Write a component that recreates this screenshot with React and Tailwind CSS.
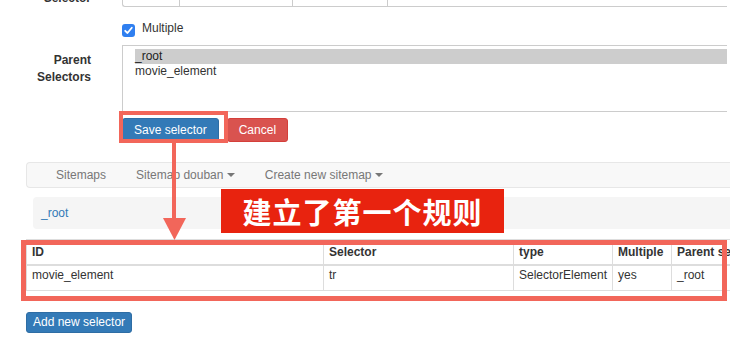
import React from "react";

function Caret() {
  return (
    <span className="inline-block align-middle w-0 h-0 border-l-[4px] border-r-[4px] border-t-[4px] border-l-transparent border-r-transparent border-t-[#777]" />
  );
}

export default function App() {
  const cols = ["ID", "Selector", "type", "Multiple", "Parent selectors"];
  const row = ["movie_element", "tr", "SelectorElement", "yes", "_root"];
  return (
    <div className="relative w-[730px] h-[347px] overflow-hidden bg-white text-[12px] leading-[17px] text-[#333] font-['Liberation_Sans',Arial,sans-serif]">
      <div className="flex flex-col mt-[-23px]">
        {/* Selector row */}
        <div className="flex h-[30px]">
          <div className="w-[91px] self-end text-right font-bold">Selector</div>
          <div className="ml-[31px] flex w-[605px] h-[30px] border border-[#ccc] border-r-0 rounded-bl-[3px]">
            <div className="w-[57px] border-r border-[#ccc] flex items-end justify-center pb-[4px]">Select</div>
            <div className="w-[113px] border-r border-[#ccc] flex items-end justify-center pb-[4px]">Element preview</div>
            <div className="w-[95px] border-r border-[#ccc] flex items-end justify-center pb-[4px]">Data preview</div>
            <div className="flex-1" />
          </div>
        </div>

        {/* Multiple */}
        <div className="flex items-end mt-[13px] h-[17px] pl-[122px]">
          <span className="w-[13px] h-[13px] rounded-[3px] bg-[#2f7ff0] flex items-center justify-center">
            <svg width="11" height="11" viewBox="0 0 11 11">
              <path d="M2.2 5.8 L4.5 8 L8.8 2.8" fill="none" stroke="#fff" strokeWidth="1.8" strokeLinecap="round" strokeLinejoin="round" />
            </svg>
          </span>
          <span className="ml-[7px]">Multiple</span>
        </div>

        {/* Parent selectors */}
        <div className="flex mt-[8px]">
          <div className="w-[91px] text-right font-bold pt-[7px]">
            Parent
            <br />
            Selectors
          </div>
          <div className="ml-[31px] w-[605px] h-[67px] border border-[#ccc] border-r-0 pt-[3px] pl-[12px] flex flex-col">
            <div className="h-[15px] leading-[15px] bg-[#cdcdcd] text-[#222]">_root</div>
            <div className="h-[15px] leading-[15px]">movie_element</div>
          </div>
        </div>

        {/* Buttons */}
        <div className="flex mt-[6px] pl-[122px]">
          <button className="h-[24px] px-[11px] border border-[#2e6da4] bg-[#337ab7] text-white rounded-[3px] leading-[17px]">
            Save selector
          </button>
          <button className="ml-[8px] h-[24px] px-[11px] border border-[#d43f3a] bg-[#d9534f] text-white rounded-[3px] leading-[17px]">
            Cancel
          </button>
        </div>

        {/* Navbar */}
        <div className="ml-[26px] mt-[20px] h-[26px] bg-[#f8f8f8] border border-[#e7e7e7] border-r-0 rounded-l-[4px] flex items-center pl-[14px] text-[#777]">
          <span className="px-[15px]">Sitemaps</span>
          <span className="px-[15px]">
            Sitemap douban <Caret />
          </span>
          <span className="px-[15px]">
            Create new sitemap <Caret />
          </span>
        </div>

        {/* Breadcrumb */}
        <div className="ml-[33px] mt-[9px] h-[32px] bg-[#f5f5f5] rounded-l-[4px] flex items-center px-[8px]">
          <span className="text-[#337ab7]">_root</span>
        </div>

        {/* Table */}
        <div className="ml-[26px] mt-[10px] overflow-hidden border-t border-[#ddd]">
          <div className="grid grid-cols-[297px_190px_99px_59px_120px] w-[765px]">
            {cols.map((c) => (
              <div
                key={c}
                className="h-[26px] px-[5px] pt-[4px] font-bold whitespace-nowrap border-b-2 border-l border-[#ddd]"
              >
                {c}
              </div>
            ))}
            {row.map((c, i) => (
              <div
                key={i}
                className="h-[25px] px-[5px] pt-[1px] whitespace-nowrap border-b border-l border-[#ddd]"
              >
                {c}
              </div>
            ))}
          </div>
        </div>

        {/* Add new selector */}
        <div className="ml-[26px] mt-[21px] flex">
          <button className="h-[21px] px-[6px] border border-[#2e6da4] bg-[#337ab7] text-white rounded-[3px] leading-[17px]">
            Add new selector
          </button>
        </div>
      </div>

      {/* Annotations */}
      <div className="absolute left-[119px] top-[111px] w-[109px] h-[32px] border-[4px] border-[#f2665a]" />
      <svg className="absolute left-[160px] top-[143px]" width="30" height="100" viewBox="0 0 30 100">
        <rect x="12" y="0" width="4" height="78" fill="#f2665a" />
        <polygon points="3,75 26,75 14.5,97" fill="#f2665a" />
      </svg>
      <div className="absolute left-[21px] top-[240px] w-[706px] h-[61px] border-[5px] border-[#f2665a]" />
      <div className="absolute left-[221px] top-[189px] w-[283px] h-[44px] bg-[#e8230f] flex items-center justify-center">
        <span className="text-white font-bold text-[29px] leading-[44px] tracking-[1px] font-['Noto_Sans_CJK_SC',sans-serif]">
          建立了第一个规则
        </span>
      </div>
    </div>
  );
}
